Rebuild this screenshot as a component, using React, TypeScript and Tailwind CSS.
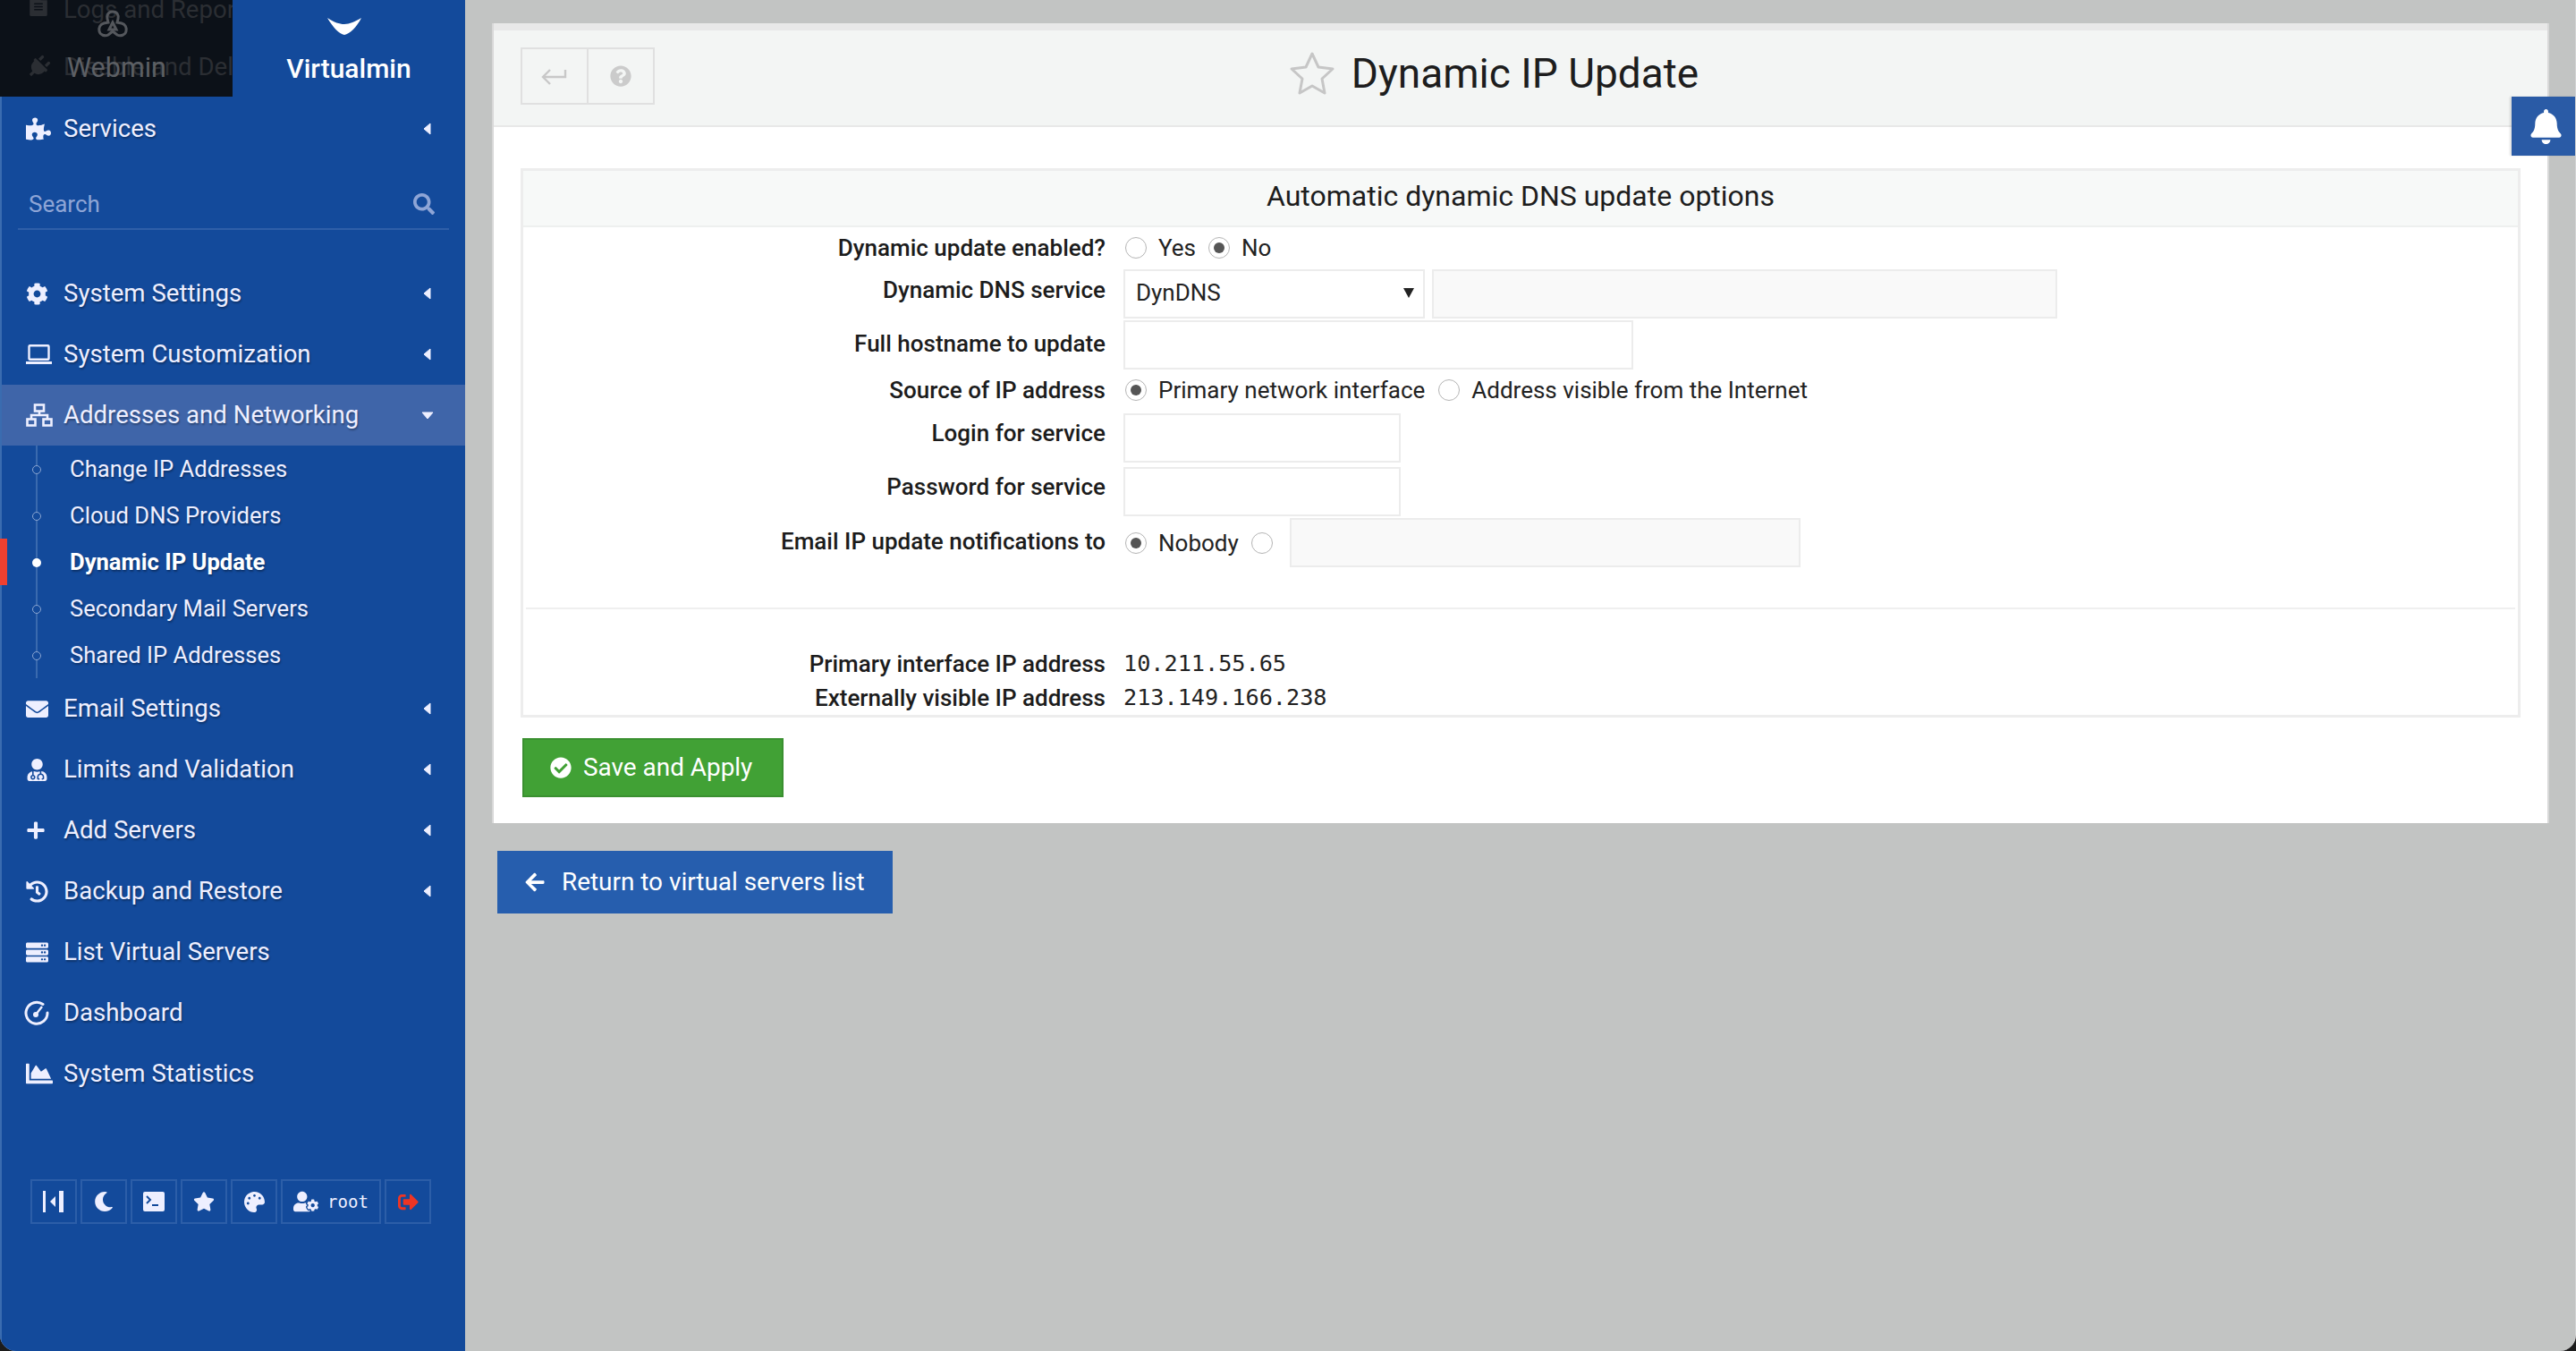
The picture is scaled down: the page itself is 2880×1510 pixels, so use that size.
import type { ReactNode } from 'react';
import {
  FaArrowLeft,
  FaBell,
  FaChartArea,
  FaCheckCircle,
  FaCog,
  FaEnvelope,
  FaFileAlt,
  FaHistory,
  FaMoon,
  FaPalette,
  FaPlug,
  FaPlus,
  FaPuzzlePiece,
  FaQuestionCircle,
  FaSearch,
  FaServer,
  FaSignOutAlt,
  FaStar,
  FaUserCog,
  FaUserMd,
} from 'react-icons/fa';

const SHADOW = '[text-shadow:1px_2px_2px_rgba(0,0,0,0.3)]';

function SitemapIcon() {
  return (
    <svg width="30" height="26" viewBox="0 0 30 26" fill="none" stroke="currentColor" strokeWidth="2.6">
      <rect x="10" y="1.5" width="10" height="7" />
      <rect x="1.5" y="17.5" width="9" height="7" />
      <rect x="19.5" y="17.5" width="9" height="7" />
      <path d="M15 8.5v4.5M6 17.5V13h18v4.5" />
    </svg>
  );
}

function LaptopIcon() {
  return (
    <svg width="29" height="22" viewBox="0 0 29 22" fill="none" stroke="currentColor">
      <rect x="3.5" y="1.2" width="22" height="15.5" rx="1" strokeWidth="2.4" />
      <path d="M0 20.5h29" strokeWidth="3" />
    </svg>
  );
}

function GaugeIcon() {
  return (
    <svg width="28" height="28" viewBox="0 0 28 28" fill="none" stroke="currentColor" strokeWidth="3" className="ml-[-2px]">
      <path d="M21 4.5A12 12 0 1 0 26 14" strokeLinecap="round" />
      <path d="M13 16l7-9" strokeWidth="2.4" />
      <circle cx="13" cy="16" r="3" fill="currentColor" stroke="none" />
    </svg>
  );
}

function Caret({ open }: { open?: boolean }) {
  return open ? (
    <svg width="14" height="9" viewBox="0 0 14 9" className="mr-[-3px]">
      <path d="M1 1h12L7 8z" fill="currentColor" stroke="currentColor" strokeLinejoin="round" />
    </svg>
  ) : (
    <svg width="9" height="14" viewBox="0 0 9 14">
      <path d="M8 1v12L1 7z" fill="currentColor" stroke="currentColor" strokeLinejoin="round" />
    </svg>
  );
}

function MenuRow({
  icon,
  label,
  caret,
  open,
  active,
  className,
}: {
  icon: ReactNode;
  label: string;
  caret?: boolean;
  open?: boolean;
  active?: boolean;
  className?: string;
}) {
  return (
    <div
      className={`flex h-[68px] items-center pl-[27px] pr-[38px] text-[#eeefff] ${active ? 'bg-[#3f65a9]' : ''} ${className ?? ''}`}
    >
      <span className="flex w-[42px] shrink-0 items-center text-[25px]">{icon}</span>
      <span className={`flex-1 text-[27.6px] leading-none ${SHADOW}`}>{label}</span>
      {caret && <Caret open={open} />}
    </div>
  );
}

function SubRow({ label, active }: { label: string; active?: boolean }) {
  return (
    <div className="relative flex h-[52px] items-center pl-[76px] pt-[1px]">
      {active && <span className="absolute left-[-2px] top-0 h-full w-[8px] bg-[#ef4030]" />}
      <span
        className={`absolute left-[34px] h-[10px] w-[10px] rounded-full ${
          active ? 'bg-white' : 'border-[1.5px] border-[#8ba6d2] bg-[#134a9b]'
        }`}
      />
      <span
        className={`text-[25.6px] leading-none ${SHADOW} ${active ? 'font-bold text-white' : 'text-[#eeefff]'}`}
      >
        {label}
      </span>
    </div>
  );
}

function ToolButton({ children, wide }: { children: ReactNode; wide?: boolean }) {
  return (
    <div
      className={`flex h-[50px] items-center justify-center border-2 border-[#2c5ea8] text-[#eeefff] ${
        wide ? 'w-[112px] gap-[10px]' : 'w-[52px]'
      }`}
    >
      {children}
    </div>
  );
}

function Radio({ checked }: { checked?: boolean }) {
  return (
    <span className="flex h-[24px] w-[24px] shrink-0 items-center justify-center rounded-full border-[1.5px] border-[#b5b5b5] bg-white">
      {checked && <span className="h-[12px] w-[12px] rounded-full bg-[#555]" />}
    </span>
  );
}

function FormRow({
  label,
  height,
  labelClass,
  children,
}: {
  label: string;
  height: string;
  labelClass?: string;
  children: ReactNode;
}) {
  return (
    <div className={`flex items-center ${height}`}>
      <div className={`w-[651px] shrink-0 text-right text-[26px] font-medium leading-none text-[#1c1c1c] ${labelClass ?? ''}`}>
        {label}
      </div>
      <div className="ml-[20px] flex items-center text-[26px] leading-none text-[#222]">{children}</div>
    </div>
  );
}

function TextBox({ width, muted }: { width: string; muted?: boolean }) {
  return (
    <input
      readOnly
      className={`h-[55px] border-2 border-[#ececec] outline-none ${width} ${muted ? 'bg-[#f9f9f9]' : 'bg-white'}`}
    />
  );
}

export default function App() {
  return (
    <div className="h-[1510px] w-[2880px] overflow-hidden bg-[#1c1c1c] font-['Roboto',sans-serif]">
      <div className="relative flex h-full overflow-hidden rounded-b-[18px] border-r border-[#d4d4d4] bg-[#c2c4c3]">
        <aside className="h-full w-[520px] shrink-0 border-l-2 border-[#3a6cb0] bg-[#134a9b]">
          <div className="flex h-[109px]">
            <div className="relative ml-[-2px] h-[108px] w-[260px] overflow-hidden bg-[#0c1118] text-[#2b2e33]">
              <FaFileAlt className="absolute left-[30px] top-[-8px] text-[26px]" />
              <div className="absolute left-[71px] top-[-6px] whitespace-nowrap text-[27.6px] leading-[34px]">
                Logs and Reports
              </div>
              <FaPlug className="absolute left-[30px] top-[62px] rotate-45 text-[26px]" />
              <div className="absolute left-[71px] top-[58px] whitespace-nowrap text-[27.6px] leading-[34px]">
                Disable and Delete
              </div>
              <svg
                width="36"
                height="36"
                viewBox="0 0 36 36"
                fill="none"
                stroke="#54575c"
                strokeWidth="3"
                className="absolute left-[108px] top-[11px]"
              >
                <path d="M18 2c5 0 7 4 6 8l-1 4 5 1c4 1 6 5 5 9s-6 6-10 4l-5-4-5 4c-4 2-9 0-10-4s1-8 5-9l5-1-1-4c-1-4 1-8 6-8z" />
                <path d="M18 14l-4 8h8z" />
              </svg>
              <div className="absolute left-[75px] top-[59px] text-[30.5px] leading-[34px] text-[#5c5f64]">
                Webmin
              </div>
            </div>
            <div className="flex h-[108px] flex-1 flex-col items-center pt-[20px] text-white">
              <svg width="38" height="19" viewBox="0 0 38 19" className="ml-[-10px]">
                <path d="M0 0C8 5 13 7 19 7S31 4 38 0C33 10 25 18 19 19 13 18 6 10 0 0z" fill="currentColor" />
              </svg>
              <div className="mt-[23px] text-[30px] font-medium leading-none">Virtualmin</div>
            </div>
          </div>

          <MenuRow icon={<FaPuzzlePiece className="text-[28px]" />} label="Services" caret className="pt-[1px]" />

          <div className="mx-[18px] mt-[32px] flex h-[48px] items-center justify-between border-b-2 border-[#2f5fa8] pb-[8px] pl-[12px] pr-[16px] text-[#8ea5d6]">
            <span className="text-[26px] leading-none">Search</span>
            <FaSearch className="text-[24px]" />
          </div>

          <div className="mt-[37px]">
            <MenuRow icon={<FaCog />} label="System Settings" caret />
            <MenuRow icon={<LaptopIcon />} label="System Customization" caret />
            <MenuRow icon={<SitemapIcon />} label="Addresses and Networking" caret open active />
            <div className="relative">
              <span className="absolute bottom-0 left-[37.5px] top-0 w-[2px] bg-[#3a6aae]" />
              <SubRow label="Change IP Addresses" />
              <SubRow label="Cloud DNS Providers" />
              <SubRow label="Dynamic IP Update" active />
              <SubRow label="Secondary Mail Servers" />
              <SubRow label="Shared IP Addresses" />
            </div>
            <MenuRow icon={<FaEnvelope />} label="Email Settings" caret />
            <MenuRow icon={<FaUserMd />} label="Limits and Validation" caret />
            <MenuRow icon={<FaPlus className="text-[22px]" />} label="Add Servers" caret />
            <MenuRow icon={<FaHistory />} label="Backup and Restore" caret />
            <MenuRow icon={<FaServer />} label="List Virtual Servers" />
            <MenuRow icon={<GaugeIcon />} label="Dashboard" />
            <MenuRow icon={<FaChartArea className="text-[30px]" />} label="System Statistics" />
          </div>

          <div className="ml-[32px] mt-[84px] flex gap-[4px]">
            <ToolButton>
              <svg width="24" height="24" viewBox="0 0 24 24" fill="currentColor">
                <rect x="0" y="0" width="3" height="24" />
                <rect x="18" y="0" width="5" height="24" />
                <path d="M14 6v12L8 12z" />
              </svg>
            </ToolButton>
            <ToolButton>
              <FaMoon className="text-[22px]" />
            </ToolButton>
            <ToolButton>
              <svg width="24" height="22" viewBox="0 0 24 22">
                <rect width="24" height="22" rx="2" fill="currentColor" />
                <path d="M4 5l4 4-4 4" fill="none" stroke="#134a9b" strokeWidth="2" />
                <path d="M10 15h7" stroke="#134a9b" strokeWidth="2" />
              </svg>
            </ToolButton>
            <ToolButton>
              <FaStar className="text-[24px]" />
            </ToolButton>
            <ToolButton>
              <FaPalette className="text-[23px]" />
            </ToolButton>
            <ToolButton wide>
              <FaUserCog className="text-[28px]" />
              <span className="font-['DejaVu_Sans_Mono',monospace] text-[19px] leading-none">root</span>
            </ToolButton>
            <ToolButton>
              <FaSignOutAlt className="text-[23px] text-[#ee3524]" />
            </ToolButton>
          </div>
        </aside>

        <main className="min-w-0 flex-1 pl-[30px] pr-[29px] pt-[26px]">
          <div className="h-[894px] border-x-2 border-[#d8d8d8] bg-white">
            <header className="relative flex h-[116px] items-center justify-center border-b-2 border-t-8 border-b-[#e8e8e8] border-t-[#e8e8e8] bg-[#f3f5f4] pb-[10px] pr-[60px]">
              <div className="absolute left-[30px] top-[19px] flex h-[64px] w-[150px] border-2 border-[#e0e0e0]">
                <div className="flex w-[74px] items-center justify-center border-r-2 border-[#e0e0e0] text-[#c8c8c8]">
                  <svg width="30" height="22" viewBox="0 0 30 22" fill="none" stroke="currentColor" strokeWidth="2.4">
                    <path d="M2 12h25V4" />
                    <path d="M10 4l-8 8 8 8" />
                  </svg>
                </div>
                <div className="flex flex-1 items-center justify-center text-[#cbcbcb]">
                  <FaQuestionCircle className="text-[24px]" />
                </div>
              </div>
              <svg width="52" height="50" viewBox="0 0 52 50" fill="none" stroke="#c6c6c6" strokeWidth="3" strokeLinejoin="round">
                <path d="M26 3l7 15 16 2-12 11 3 16-14-8-14 8 3-16L3 20l16-2z" />
              </svg>
              <h1 className="ml-[18px] text-[46px] font-normal leading-none text-[#1d1d1d]">Dynamic IP Update</h1>
            </header>

            <div className="pl-[30px] pr-[30px] pt-[46px]">
              <section className="h-[614px] border-[3px] border-[#ededed]">
                <div className="flex h-[63px] items-center justify-center border-b-2 border-[#eef0ef] bg-[#f7f9f8] pb-[5px] text-[32px] leading-none text-[#1d1d1d]">
                  Automatic dynamic DNS update options
                </div>
                <FormRow label="Dynamic update enabled?" height="h-[45px]">
                  <span className="ml-[2px]">
                    <Radio />
                  </span>
                  <span className="ml-[13px]">Yes</span>
                  <span className="ml-[14px]">
                    <Radio checked />
                  </span>
                  <span className="ml-[13px]">No</span>
                </FormRow>
                <FormRow label="Dynamic DNS service" height="h-[58px]" labelClass="mt-[-8px]">
                  <div className="flex h-[55px] w-[337px] items-center justify-between border-2 border-[#ececec] pb-[2px] pl-[12px] pr-[10px]">
                    <span>DynDNS</span>
                    <svg width="12" height="13" viewBox="0 0 12 13">
                      <path d="M0 1h12L6 12z" fill="#222" />
                    </svg>
                  </div>
                  <span className="ml-[8px]">
                    <TextBox width="w-[699px]" muted />
                  </span>
                </FormRow>
                <FormRow label="Full hostname to update" height="h-[56px]" labelClass="mt-[-3px]">
                  <TextBox width="w-[570px]" />
                </FormRow>
                <FormRow label="Source of IP address" height="h-[46px]">
                  <span className="ml-[2px]">
                    <Radio checked />
                  </span>
                  <span className="ml-[13px]">Primary network interface</span>
                  <span className="ml-[15px]">
                    <Radio />
                  </span>
                  <span className="ml-[13px]">Address visible from the Internet</span>
                </FormRow>
                <FormRow label="Login for service" height="h-[60px]" labelClass="mt-[-10px]">
                  <TextBox width="w-[310px]" />
                </FormRow>
                <FormRow label="Password for service" height="h-[60px]" labelClass="mt-[-10px]">
                  <TextBox width="w-[310px]" />
                </FormRow>
                <FormRow label="Email IP update notifications to" height="h-[55px]" labelClass="mt-[-4px]">
                  <span className="ml-[2px]">
                    <Radio checked />
                  </span>
                  <span className="ml-[13px]">Nobody</span>
                  <span className="ml-[14px]">
                    <Radio />
                  </span>
                  <span className="ml-[19px]">
                    <TextBox width="w-[571px]" muted />
                  </span>
                </FormRow>
                <div className="mx-[3px] mt-[45px] h-[2px] bg-[#efefef]" />
                <FormRow label="Primary interface IP address" height="h-[39px] mt-[41px]">
                  <span className="font-['DejaVu_Sans_Mono',monospace] text-[25.2px]">10.211.55.65</span>
                </FormRow>
                <FormRow label="Externally visible IP address" height="h-[38px]">
                  <span className="font-['DejaVu_Sans_Mono',monospace] text-[25.2px]">213.149.166.238</span>
                </FormRow>
              </section>
              <button className="ml-[2px] mt-[23px] flex h-[66px] w-[292px] items-center gap-[13px] border-2 border-[#3a9030] bg-[#41a135] pl-[29px] text-[27.9px] leading-none text-white">
                <FaCheckCircle className="text-[24px]" />
                Save and Apply
              </button>
            </div>
          </div>

          <button className="ml-[6px] mt-[31px] flex h-[70px] w-[442px] items-center gap-[18px] bg-[#265eae] pl-[30px] text-[27.9px] leading-none text-white">
            <FaArrowLeft className="text-[24px]" />
            Return to virtual servers list
          </button>
        </main>

        <div className="absolute right-0 top-[108px] flex h-[66px] w-[71px] items-center justify-center bg-[#2a5ba6] pl-[5px] text-white shadow-[-2px_0_2px_rgba(0,0,0,0.12)]">
          <FaBell className="text-[39px]" />
        </div>
      </div>
    </div>
  );
}
